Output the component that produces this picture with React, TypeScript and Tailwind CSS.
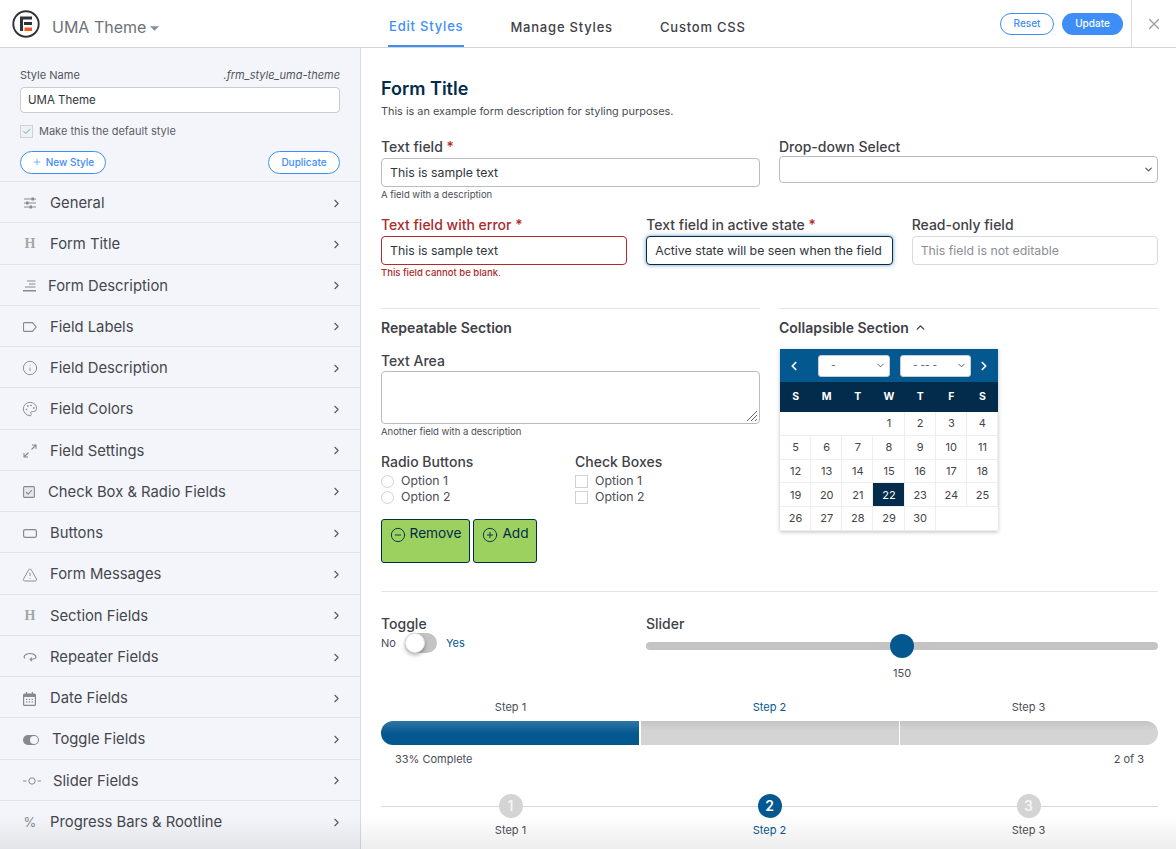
import React from 'react';
import {
  ChevronRight, ChevronLeft, ChevronUp, ChevronDown, Info, Palette,
  TriangleAlert, Plus, X, CirclePlus, CircleMinus,
} from 'lucide-react';

const Logo = () => (
  <svg width="28" height="28" viewBox="0 0 28 28" className="shrink-0">
    <circle cx="14" cy="14" r="12.7" fill="none" stroke="#2f3237" strokeWidth="1.9" />
    <path d="M8 6.500h12v3H11V21H8z M12 12h8v3h-8z" fill="#2f3237" />
    <rect x="12.500" y="17.500" width="7.500" height="3.500" fill="#f05a28" />
  </svg>
);

const Heading = () => <span className="mt-[2px] w-[14px] text-center font-['Liberation_Serif',serif] text-[14px] font-bold leading-none text-[#a2a5aa]">H</span>;

const ic = '-mx-[1px] mt-[2px] h-[16px] w-[16px] text-[#868991]';

const menu: { label: string; icon: React.ReactNode; gap?: string }[] = [
  {
    label: 'General',
    icon: (
      <svg viewBox="0 0 14 12" className="mt-[2px] h-[12px] w-[14px] text-[#868991]" fill="currentColor">
        <path d="M1 1.500h12v1H1zM1 5.500h12v1H1zM1 9.500h12v1H1z" />
        <path d="M8.500.500h2.500v3H8.500zM3 4.500h2.500v3H3zM6.500 8.500H9v3H6.500z" />
      </svg>
    ),
  },
  { label: 'Form Title', icon: <Heading /> },
  {
    label: 'Form Description',
    gap: 'gap-[12px]',
    icon: (
      <svg viewBox="0 0 13 12" className="mt-[2px] h-[12px] w-[13px] text-[#868991]" fill="currentColor">
        <path d="M4 .500h8.500v1H4zM6 3.500h6.500v1H6zM2 6.500h10.500v1H2zM0 10h13v1.500H0z" />
      </svg>
    ),
  },
  {
    label: 'Field Labels',
    icon: (
      <svg viewBox="0 0 14 10" className="mt-[2px] h-[10px] w-[14px] text-[#868991]" fill="none" stroke="currentColor" strokeWidth="1.100">
        <path d="M1.500.600h8L13.200 5 9.500 9.400h-8a1 1 0 0 1-1-1V1.600a1 1 0 0 1 1-1z" />
      </svg>
    ),
  },
  { label: 'Field Description', icon: <Info className={ic} strokeWidth={1.4} /> },
  { label: 'Field Colors', icon: <Palette className={ic} strokeWidth={1.4} /> },
  {
    label: 'Field Settings',
    icon: (
      <svg viewBox="0 0 14 14" className="mt-[2px] h-[14px] w-[14px] text-[#868991]" fill="none" stroke="currentColor" strokeWidth="1.100">
        <path d="M8.500 5.500 13 1M9 1h4v4M5.500 8.500 1 13M1 9v4h4" />
      </svg>
    ),
  },
  {
    label: 'Check Box & Radio Fields',
    gap: 'gap-[13px]',
    icon: (
      <svg viewBox="0 0 12 12" className="mt-[3px] h-[12px] w-[12px] text-[#868991]" fill="none" stroke="currentColor" strokeWidth="1.100">
        <rect x=".6" y=".6" width="10.800" height="10.800" rx="1" fill="#e8e9ed" />
        <path d="m3 6 2.200 2.200L9 4" />
      </svg>
    ),
  },
  {
    label: 'Buttons',
    icon: (
      <svg viewBox="0 0 14 9" className="mt-[2px] h-[9px] w-[14px] text-[#868991]" fill="none" stroke="currentColor" strokeWidth="1.200">
        <rect x=".6" y=".6" width="12.800" height="7.800" rx="1.600" />
      </svg>
    ),
  },
  { label: 'Form Messages', icon: <TriangleAlert className={ic} strokeWidth={1.4} /> },
  { label: 'Section Fields', icon: <Heading /> },
  {
    label: 'Repeater Fields',
    icon: (
      <svg viewBox="0 0 14 10" className="mt-[2px] h-[10px] w-[14px] text-[#868991]" fill="none" stroke="currentColor" strokeWidth="1.200">
        <path d="M2 6.400C.2 5 1.500 1.500 7 1.500s6.800 3.500 5 4.900c-.9.700-2.500 1-4.500 1" />
        <path d="M9 5.600 7.200 7.400 9 9.200" />
      </svg>
    ),
  },
  {
    label: 'Date Fields',
    gap: 'gap-[14px]',
    icon: (
      <svg viewBox="0 0 13 14" className="mt-[3px] h-[14px] w-[13px] text-[#868991]" fill="currentColor">
        <path d="M3 0h1.200v1.500h4.600V0H10v1.500h1.500A1.500 1.500 0 0 1 13 3v9.500a1.500 1.500 0 0 1-1.500 1.500h-10A1.500 1.500 0 0 1 0 12.500V3a1.500 1.500 0 0 1 1.500-1.500H3z" />
        <path fill="#f4f5fa" d="M1.200 5h10.600v7.500a.3.3 0 0 1-.3.300h-10a.3.3 0 0 1-.3-.300z" />
        <path d="M3 6.800h1.300v1.200H3zM5.800 6.800h1.300v1.200H5.800zM8.600 6.800h1.300v1.200H8.600zM3 9.300h1.300v1.200H3zM5.800 9.300h1.300v1.200H5.800zM8.600 9.300h1.300v1.200H8.600z" />
      </svg>
    ),
  },
  {
    label: 'Toggle Fields',
    gap: 'gap-[13px]',
    icon: (
      <span className="mt-[2px] flex h-[10px] w-[16px] items-center justify-end rounded-full bg-[#868991] pr-[1px]">
        <span className="h-[8px] w-[8px] rounded-full bg-[#f4f5fa]" />
      </span>
    ),
  },
  {
    label: 'Slider Fields',
    gap: 'gap-[12px]',
    icon: (
      <svg viewBox="0 0 18 8" className="mt-[2px] h-[8px] w-[18px] text-[#868991]" fill="none" stroke="currentColor" strokeWidth="1">
        <path d="M0 4h3.500M14.500 4H18" />
        <circle cx="9" cy="4" r="3.200" />
      </svg>
    ),
  },
  { label: 'Progress Bars & Rootline', icon: <span className="mt-[2px] w-[14px] text-center text-[13px] leading-none text-[#868991]">%</span> },
];

const labelCls = 'block text-sm font-medium leading-[17px] text-[#3f4148]';
const inputCls = 'h-[29px] w-full rounded-[4px] border border-[#b9bdc3] bg-white px-2 text-[12.300px] text-[#31353c] outline-none';
const Req = () => <span className="text-[#b02a2a]"> *</span>;

const weeks: (number | null)[][] = [
  [null, null, null, 1, 2, 3, 4],
  [5, 6, 7, 8, 9, 10, 11],
  [12, 13, 14, 15, 16, 17, 18],
  [19, 20, 21, 22, 23, 24, 25],
  [26, 27, 28, 29, 30, null, null],
];

const Calendar = () => (
  <div className="ml-[1px] mt-[13px] w-[218px] bg-white shadow-[0_1px_4px_rgba(0,0,0,0.25)]">
    <div className="flex h-[33px] items-center justify-between bg-[#03588f] px-[7px] text-white">
      <ChevronLeft className="h-[14px] w-[14px]" strokeWidth={3} />
      <div className="ml-[11px] flex gap-[10px]">
        {['-', '- -- -'].map((v, i) => (
          <div key={i} className={`flex h-[22px] ${i === 0 ? 'w-[72px]' : 'w-[71px]'} items-center justify-between rounded-[3px] border border-[#c9ccd0] bg-white pl-[12px] pr-[3px] text-[10px] text-[#555]`}>
            <span>{v}</span>
            <ChevronDown className="h-[11px] w-[11px] text-[#555]" strokeWidth={2} />
          </div>
        ))}
      </div>
      <ChevronRight className="h-[14px] w-[14px]" strokeWidth={3} />
    </div>
    <div className="grid h-[30px] grid-cols-7 items-center bg-[#022b4c] text-center text-[10.500px] font-bold text-white">
      {['S', 'M', 'T', 'W', 'T', 'F', 'S'].map((d, i) => (
        <span key={i}>{d}</span>
      ))}
    </div>
    {weeks.map((w, i) => (
      <div key={i} className="grid h-[23.800px] grid-cols-7 border-b border-[#eeeeee]">
        {w.map((d, j) => (
          <div
            key={j}
            className={`flex items-center justify-center border-r border-[#eeeeee] pl-px text-[11px] ${d === 22 ? 'bg-[#022b4c] text-white' : 'text-[#444]'} ${d === null ? 'border-r-transparent' : ''}`}
          >
            {d}
          </div>
        ))}
      </div>
    ))}
  </div>
);

const Choice = ({ round }: { round?: boolean }) => (
  <div className="flex flex-col">
    {['Option 1', 'Option 2'].map((o) => (
      <div key={o} className="flex h-4 items-center gap-[7px] text-[12.300px] text-[#4a4d55]">
        <span className={`h-[13px] w-[13px] border border-[#cfd1d5] bg-white ${round ? 'rounded-full' : ''}`} />
        {o}
      </div>
    ))}
  </div>
);

export default function App() {
  return (
    <div className="relative flex h-[849px] w-[1176px] flex-col overflow-hidden bg-white font-['Inter','Liberation_Sans',sans-serif]">
      {/* Header */}
      <header className="flex h-[48px] shrink-0 items-center border-b border-[#d2d4d8]">
        <div className="flex w-[361px] items-center pl-[12px]">
          <Logo />
          <span className="ml-[12px] mt-[6px] text-[16px] text-[#6d7178]">UMA Theme</span>
          <svg viewBox="0 0 10 5" className="ml-[4px] mt-[9px] h-[5px] w-[9px]" fill="#8b8e94">
            <path d="M0 0h10L5 5z" />
          </svg>
        </div>
        <nav className="ml-[27px] flex h-full text-[13px] font-medium tracking-[0.8px]">
          <a className="mr-[46px] flex items-center border-b-2 border-[#3e8ef7] px-[1px] pt-[8px] text-[#3e8ef7]">Edit Styles</a>
          <a className="mr-[47px] flex items-center pt-[8px] text-[#3f4148]">Manage Styles</a>
          <a className="flex items-center pt-[8px] text-[#3f4148]">Custom CSS</a>
        </nav>
        <div className="ml-auto flex h-full items-center">
          <button className="h-[22px] w-[54px] rounded-full border border-[#3e8ef7] bg-white text-[10px] font-medium text-[#3e8ef7]">Reset</button>
          <button className="ml-[8px] h-[22px] w-[61px] rounded-full bg-[#3e8ef7] text-[10px] font-medium text-white">Update</button>
          <div className="ml-[8px] flex h-full w-[45px] items-center justify-center border-l border-[#dcdde0]">
            <X className="h-[18px] w-[18px] text-[#9a9da3]" strokeWidth={1.7} />
          </div>
        </div>
      </header>

      <div className="flex min-h-0 flex-1">
        {/* Sidebar */}
        <aside className="w-[361px] shrink-0 border-r border-[#d8dadd] bg-[#f4f5fa]">
          <div className="h-[133px] px-[20px] pt-[20px]">
            <div className="flex items-center justify-between text-[11px] leading-[14px] text-[#50545b]">
              <span>Style Name</span>
              <span className="italic">.frm_style_uma-theme</span>
            </div>
            <input readOnly value="UMA Theme" className="mt-[5px] h-[26px] w-full rounded-[4px] border border-[#c9ccd1] bg-white px-[7px] text-[11.500px] text-[#31353c] outline-none" />
            <div className="mt-[10px] flex items-center gap-[6px] text-[11px] text-[#5a5e65]">
              <span className="flex h-[13px] w-[13px] items-center justify-center border border-[#cfd1d5] bg-[#f0f1f4] text-[11px] leading-none text-[#7fb8dc]">✓</span>
              Make this the default style
            </div>
            <div className="mt-[11px] flex justify-between">
              <button className="flex h-[23px] w-[86px] items-center justify-center gap-[4px] rounded-full border border-[#3e8ef7] bg-white text-[10px] font-medium text-[#3e8ef7]">
                <Plus className="h-[10px] w-[10px]" strokeWidth={1.5} />
                New Style
              </button>
              <button className="h-[23px] w-[72px] rounded-full border border-[#3e8ef7] bg-white text-[10px] font-medium text-[#3e8ef7]">Duplicate</button>
            </div>
          </div>
          {menu.map((m) => (
            <div key={m.label} className={`flex h-[41.270px] items-center border-t border-[#e2e3e7] pl-[23px] pr-[17px] text-[14.800px] text-[#44474e] ${m.gap ?? 'gap-[13px]'}`}>
              {m.icon}
              <span className="mt-[2px]">{m.label}</span>
              <ChevronRight className="ml-auto mt-[2px] h-[13px] w-[13px] text-[#55585f]" strokeWidth={2} />
            </div>
          ))}
        </aside>

        {/* Form preview */}
        <main className="min-w-0 flex-1 pl-[20px] pr-[18px] pt-[29px]">
          <h1 className="text-[18px] font-semibold leading-[24px] text-[#022b4c]">Form Title</h1>
          <p className="mt-[3px] text-[10.900px] leading-[14px] text-[#4a4d55]">This is an example form description for styling purposes.</p>

          <div className="mt-[20px] grid grid-cols-2 gap-x-[19px]">
            <div>
              <label className={labelCls}>Text field<Req /></label>
              <input readOnly value="This is sample text" className={`${inputCls} mt-[3px]`} />
              <p className="mt-[1px] text-[9.500px] leading-[13px] text-[#4a4d55]">A field with a description</p>
            </div>
            <div>
              <label className={labelCls}>Drop-down Select</label>
              <div className="mt-[1px] flex h-[27px] items-center justify-end rounded-[4px] border border-[#b9bdc3] bg-white pr-[3px]">
                <ChevronDown className="h-[11px] w-[11px] text-[#555]" strokeWidth={2.5} />
              </div>
            </div>
          </div>

          <div className="mt-[15px] grid grid-cols-3 gap-x-[19px]">
            <div>
              <label className={`${labelCls} !text-[#a92b2b]`}>Text field with error<Req /></label>
              <input readOnly value="This is sample text" className={`${inputCls} mt-[3px] !border-[#b02a2a]`} />
              <p className="mt-[1px] text-[9.500px] font-medium leading-[13px] text-[#a92b2b]">This field cannot be blank.</p>
            </div>
            <div>
              <label className={labelCls}>Text field in active state<Req /></label>
              <input readOnly value="Active state will be seen when the field is clicked" className={`${inputCls} mt-[3px] !border-[#022b4c] shadow-[0_0_4px_rgba(3,88,143,0.6)]`} />
            </div>
            <div>
              <label className={labelCls}>Read-only field</label>
              <input readOnly value="This field is not editable" className={`${inputCls} mt-[3px] !border-[#d8dadd] !text-[#8b8e94]`} />
            </div>
          </div>

          <div className="mt-[29px] grid grid-cols-2 gap-x-[19px]">
            <div className="border-t border-[#e4e5e8] pt-[10px]">
              <h3 className="text-sm font-semibold leading-[17px] text-[#3f4148]">Repeatable Section</h3>
              <label className={`${labelCls} mt-[16px]`}>Text Area</label>
              <div className="relative mt-[2px] h-[53px] rounded-[4px] border border-[#b9bdc3] bg-white">
                <svg viewBox="0 0 10 10" className="absolute bottom-[2px] right-[2px] h-[10px] w-[10px]" stroke="#666" strokeWidth="1">
                  <path d="M10 0 0 10M10 4 4 10M10 8 8 10" />
                </svg>
              </div>
              <p className="mt-[1px] text-[9.500px] leading-[13px] text-[#4a4d55]">Another field with a description</p>
              <div className="mt-[15px] grid grid-cols-[194px_1fr]">
                <div>
                  <label className={labelCls}>Radio Buttons</label>
                  <div className="mt-[3px]"><Choice round /></div>
                </div>
                <div>
                  <label className={labelCls}>Check Boxes</label>
                  <div className="mt-[3px]"><Choice /></div>
                </div>
              </div>
              <div className="mt-[14px] flex gap-[3px]">
                <button className="flex h-[44px] w-[89px] items-start justify-center gap-[4px] rounded-[3px] border border-[#022b4c] bg-[#9dd15f] pt-[3px] text-[13.700px] text-[#022b4c]">
                  <CircleMinus className="mt-[4px] h-[16px] w-[16px]" strokeWidth={1.4} />
                  Remove
                </button>
                <button className="flex h-[44px] w-[64px] items-start justify-center gap-[4px] rounded-[3px] border border-[#022b4c] bg-[#9dd15f] pt-[3px] pl-[1px] text-[13.700px] text-[#022b4c]">
                  <CirclePlus className="mt-[4px] h-[16px] w-[16px]" strokeWidth={1.4} />
                  Add
                </button>
              </div>
            </div>
            <div className="border-t border-[#e4e5e8] pt-[10px]">
              <h3 className="flex items-center gap-[5px] text-sm font-semibold leading-[17px] text-[#3f4148]">
                Collapsible Section
                <ChevronUp className="h-[13px] w-[13px]" strokeWidth={2.5} />
              </h3>
              <Calendar />
            </div>
          </div>

          <div className="mt-[28px] grid grid-cols-[265px_1fr] border-t border-[#e4e5e8] pt-[23px]">
            <div>
              <label className={labelCls}>Toggle</label>
              <div className="mt-[1px] flex items-center text-[11px] text-[#4a4d55]">
                <span>No</span>
                <span className="ml-[9px] flex h-[20px] w-[32px] items-center rounded-full bg-[#c4c4c4]">
                  <span className="h-[20px] w-[20px] rounded-full border border-[#e4e4e4] bg-white shadow-[0_2px_4px_rgba(0,0,0,0.35)]" />
                </span>
                <span className="ml-[9px] text-[#03588f]">Yes</span>
              </div>
            </div>
            <div>
              <label className={labelCls}>Slider</label>
              <div className="relative mt-[10px] h-[8px] rounded-full bg-[#c4c4c4]">
                <span className="absolute -top-[8px] left-[244px] h-[24px] w-[24px] rounded-full bg-[#03588f]" />
              </div>
              <p className="mt-[16px] pl-[247px] text-[11px] leading-[14px] text-[#4a4d55]">150</p>
            </div>
          </div>

          <div className="mt-[20px] grid grid-cols-3 text-center text-[11px] leading-[14px] text-[#4a4d55]">
            <span>Step 1</span>
            <span className="text-[#03588f]">Step 2</span>
            <span>Step 3</span>
          </div>
          <div className="mt-[7px] grid h-[24px] grid-cols-3 gap-[1.500px] overflow-hidden rounded-full">
            <div className="bg-gradient-to-b from-[#2d76a6] to-[#03588f] to-50%" />
            <div className="bg-gradient-to-b from-[#c4c4c4] to-[#d4d4d4] to-40%" />
            <div className="bg-gradient-to-b from-[#c4c4c4] to-[#d4d4d4] to-40%" />
          </div>
          <div className="mt-[7px] flex justify-between px-[14px] text-[11px] leading-[14px] text-[#4a4d55]">
            <span>33% Complete</span>
            <span>2 of 3</span>
          </div>

          <div className="relative mt-[28px] grid grid-cols-3 text-center text-[11px] leading-[14px] text-[#4a4d55]">
            <div className="absolute left-0 right-0 top-[12px] h-px bg-[#d8d8d8]" />
            {[1, 2, 3].map((n) => (
              <div key={n} className={`relative flex flex-col items-center ${n === 2 ? 'text-[#03588f]' : ''}`}>
                <span className={`flex h-[24px] w-[24px] items-center justify-center rounded-full text-sm font-semibold ${n === 2 ? 'bg-[#03588f] text-white' : 'bg-[#d4d4d4] text-[#f4f4f4]'}`}>{n}</span>
                <span className="mt-[5px]">Step {n}</span>
              </div>
            ))}
          </div>
        </main>
      </div>

      {/* fade at the bottom of the window */}
      <div className="pointer-events-none absolute bottom-0 left-0 right-0 h-[34px] bg-gradient-to-b from-transparent to-[#00000012]" />
    </div>
  );
}
